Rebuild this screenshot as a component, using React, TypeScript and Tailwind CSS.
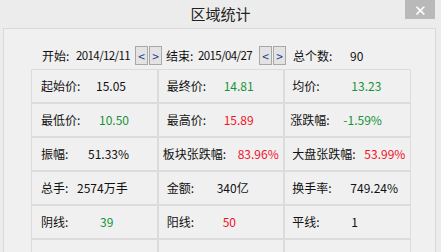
import React from "react";

type Cell = {
  label: string;
  value: string;
  color: string;
  pl: string;
  lw: string;
};

const GREEN = "text-[#14933a]";
const RED = "text-[#f0102a]";
const DARK = "text-[#111111]";

const ROWS: Cell[][] = [
  [
    { label: "起始价:", value: "15.05", color: DARK, pl: "pl-[9px]", lw: "w-[55px]" },
    { label: "最终价:", value: "14.81", color: GREEN, pl: "pl-[8px]", lw: "w-[57px]" },
    { label: "均价:", value: "13.23", color: GREEN, pl: "pl-[7px]", lw: "w-[59px]" },
  ],
  [
    { label: "最低价:", value: "10.50", color: GREEN, pl: "pl-[9px]", lw: "w-[58px]" },
    { label: "最高价:", value: "15.89", color: RED, pl: "pl-[8px]", lw: "w-[57px]" },
    { label: "涨跌幅:", value: "-1.59%", color: GREEN, pl: "pl-[5px]", lw: "w-[53px]" },
  ],
  [
    { label: "振幅:", value: "51.33%", color: DARK, pl: "pl-[9px]", lw: "w-[47px]" },
    { label: "板块张跌幅:", value: "83.96%", color: RED, pl: "pl-[4px]", lw: "w-[75px]" },
    { label: "大盘张跌幅:", value: "53.99%", color: RED, pl: "pl-[7px]", lw: "w-[72px]" },
  ],
  [
    { label: "总手:", value: "2574万手", color: DARK, pl: "pl-[9px]", lw: "w-[36px]" },
    { label: "金额:", value: "340亿", color: DARK, pl: "pl-[8px]", lw: "w-[50px]" },
    { label: "换手率:", value: "749.24%", color: DARK, pl: "pl-[7px]", lw: "w-[58px]" },
  ],
  [
    { label: "阴线:", value: "39", color: GREEN, pl: "pl-[9px]", lw: "w-[59px]" },
    { label: "阳线:", value: "50", color: RED, pl: "pl-[8px]", lw: "w-[56px]" },
    { label: "平线:", value: "1", color: DARK, pl: "pl-[7px]", lw: "w-[59px]" },
  ],
];

function StepButton({ children }: { children: React.ReactNode }) {
  return (
    <button className="flex h-[19px] w-[13px] shrink-0 items-center justify-center border border-[#a8a8a8] bg-[#e3e3e3] text-[12px] leading-none text-[#1a3a8a]">
      {children}
    </button>
  );
}

export default function App() {
  return (
    <div className="relative h-[252px] w-[441px] overflow-hidden bg-[#ececec] font-['Noto_Sans_CJK_SC',sans-serif] text-[12px] text-[#111111]">
      <div className="flex h-[28px] items-center justify-center text-[15px] text-[#222222]">区域统计</div>
      <div className="absolute right-[6px] top-0 flex h-[19px] w-[30px] items-center justify-center bg-[#b9b9b9] text-[15px] leading-none text-white">
        ✕
      </div>

      <div className="ml-[3px] h-[240px] w-[433px] border border-[#d9d9d9] bg-[#f0f0f0]">
        <div className="mt-[17px] flex h-[19px] items-center whitespace-nowrap leading-none">
          <span className="ml-[38px] w-[34px] shrink-0">开始:</span>
          <span className="w-[59px] shrink-0 text-[11.5px] tracking-[-0.6px]">2014/12/11</span>
          <StepButton>&lt;</StepButton>
          <span className="w-px shrink-0" />
          <StepButton>&gt;</StepButton>
          <span className="ml-[4px] w-[32px] shrink-0">结束:</span>
          <span className="w-[61px] shrink-0 text-[11.5px] tracking-[-0.6px]">2015/04/27</span>
          <StepButton>&lt;</StepButton>
          <span className="w-px shrink-0" />
          <StepButton>&gt;</StepButton>
          <span className="ml-[7px] w-[57px] shrink-0">总个数:</span>
          <span>90</span>
        </div>

        <div className="ml-[27px] mt-[4px] grid w-[380px] grid-cols-3">
          {ROWS.map((row, ri) =>
            row.map((c, ci) => (
              <div
                key={`${ri}-${ci}`}
                className={`flex h-[34px] items-center whitespace-nowrap border border-[#dcdcdc] leading-none ${c.pl}`}
              >
                <span className={`shrink-0 ${c.lw}`}>{c.label}</span>
                <span className={c.color}>{c.value}</span>
              </div>
            ))
          )}
          <div className="h-[34px] border border-[#dcdcdc]" />
          <div className="h-[34px] border border-[#dcdcdc]" />
          <div className="h-[34px] border border-[#dcdcdc]" />
        </div>
      </div>
    </div>
  );
}
